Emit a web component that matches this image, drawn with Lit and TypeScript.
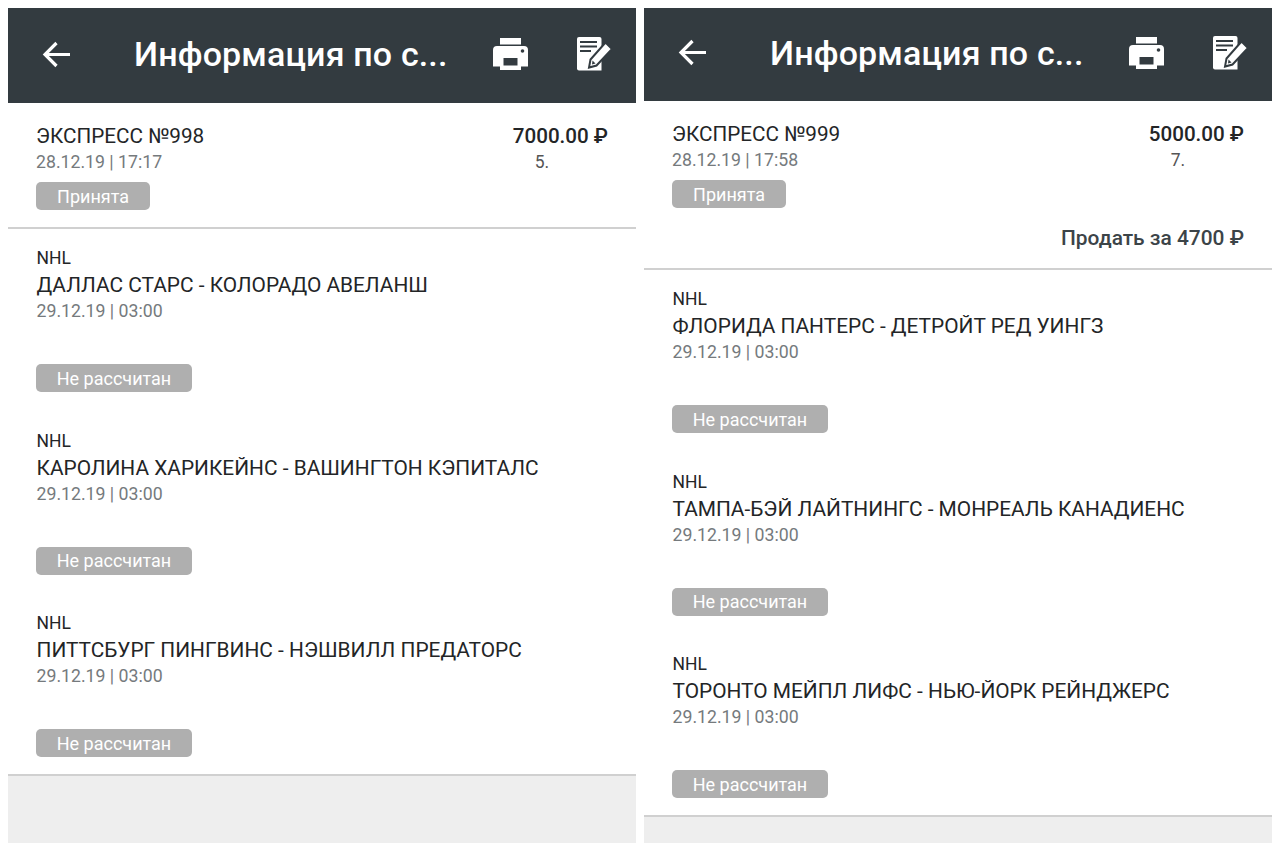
import { LitElement, html, css, svg } from "lit";
import { customElement } from "lit/decorators.js";

const DARK = "#333b40";
const back = svg`<path d="M28 13.500H3M14.500 2 3 13.500 14.500 25" fill="none" stroke="#fff" stroke-width="3.200"/>`;
const printer = svg`<path fill="#fff" d="M7 0h21v6.500H7zM4 8h27a4 4 0 0 1 4 4v16.500h-7V32H7v-3.500H0V12a4 4 0 0 1 4-4z"/><circle cx="29.500" cy="13" r="1.800" fill="${DARK}"/><path fill="${DARK}" d="M10.500 20h14v7.500h-14z"/>`;
const note = svg`<path fill="#fff" d="M2 0h20.500a2 2 0 0 1 2 2v31.500H2a2 2 0 0 1-2-2V2a2 2 0 0 1 2-2z"/><path stroke="${DARK}" stroke-width="1.800" d="M3 5h17M3 9.500h17M3 14h11"/><path fill="#fff" stroke="${DARK}" stroke-width="2" d="M28.500 5.500 35 12 19.500 28.500 12 30.500l1.500-8z"/><path fill="${DARK}" d="M15.500 23.500l3 3-3.500 1z"/>`;

type Item = [string, string];
interface Slip {
  cls: string; num: string; date: string; amount: string; sub: string; sell?: string; items: Item[];
}

const slips: Slip[] = [
  { cls: "left", num: "ЭКСПРЕСС №998", date: "28.12.19 | 17:17", amount: "7000.00 ₽", sub: "5.",
    items: [
      ["ДАЛЛАС СТАРС - КОЛОРАДО АВЕЛАНШ", "29.12.19 | 03:00"],
      ["КАРОЛИНА ХАРИКЕЙНС - ВАШИНГТОН КЭПИТАЛС", "29.12.19 | 03:00"],
      ["ПИТТСБУРГ ПИНГВИНС - НЭШВИЛЛ ПРЕДАТОРС", "29.12.19 | 03:00"],
    ] },
  { cls: "right", num: "ЭКСПРЕСС №999", date: "28.12.19 | 17:58", amount: "5000.00 ₽", sub: "7.", sell: "Продать за 4700 ₽",
    items: [
      ["ФЛОРИДА ПАНТЕРС - ДЕТРОЙТ РЕД УИНГЗ", "29.12.19 | 03:00"],
      ["ТАМПА-БЭЙ ЛАЙТНИНГС - МОНРЕАЛЬ КАНАДИЕНС", "29.12.19 | 03:00"],
      ["ТОРОНТО МЕЙПЛ ЛИФС - НЬЮ-ЙОРК РЕЙНДЖЕРС", "29.12.19 | 03:00"],
    ] },
];

@customElement("app-root")
export class AppRoot extends LitElement {
  static styles = css`
    :host { display: flex; gap: 8px; padding: 8px; height: 853px; box-sizing: border-box; background: #fff;
      font-family: Roboto, "Liberation Sans", sans-serif; color: #232527; overflow: hidden; }
    .panel { width: 628px; height: 835px; background: #eee; display: flex; flex-direction: column; overflow: hidden; }
    .bar { background: #333b40; display: flex; align-items: center; color: #fff; flex: none; box-sizing: border-box; }
    .left .bar { height: 95px; padding-bottom: 3px; }
    .right .bar { height: 93px; padding-bottom: 4px; }
    .bar svg { flex: none; display: block; }
    .back { margin-left: 34px; width: 29px; height: 27px; }
    .title { margin-left: 63px; width: 312px; font-size: 34px; font-weight: 500; white-space: nowrap; letter-spacing: 0.15px; }
    .print { margin-left: 47px; width: 35px; height: 32px; }
    .edit { margin-left: 49px; width: 35px; height: 34px; }
    .summary { background: #fff; border-bottom: 2px solid #d0d0d0; padding: 0 28px; flex: none; }
    .left .summary { height: 124px; }
    .right .summary { height: 167px; }
    .sumrow { display: flex; justify-content: space-between; padding-top: 20px; }
    .num { font-size: 20.700px; line-height: 26px; }
    .date { font-size: 17.700px; line-height: 24px; color: #757a7d; }
    .sumrow .date { line-height: 26px; }
    .amount { font-size: 20.600px; line-height: 26px; font-weight: 500; text-align: right; }
    .sub { font-size: 17.500px; line-height: 26px; color: #555; padding-left: 22px; }
    .badge { display: inline-flex; align-items: center; justify-content: center; height: 28px; background: #afafaf;
      color: #fff; border-radius: 5px; font-size: 18px; box-sizing: border-box; }
    .status { width: 114px; margin-top: 7px; }
    .sell { text-align: right; font-size: 20.900px; font-weight: 500; line-height: 26px; color: #3c4448; margin-top: 17px; }
    .list { background: #fff; border-bottom: 2px solid #d0d0d0; padding: 0 28px 14px; flex: none; }
    .item { padding-top: 16px; height: 182.500px; box-sizing: border-box; display: flex; flex-direction: column; align-items: flex-start; }
    .item:last-child { height: 166px; }
    .league { font-size: 17.500px; line-height: 26px; padding-left: 0.500px; }
    .match { font-size: 20.870px; line-height: 28px; white-space: nowrap; padding-left: 0.500px; }
    .item .date { padding-left: 0.500px; }
    .state { width: 156px; margin-top: 41px; }
  `;

  render() {
    return slips.map((s) => html`
      <section class="panel ${s.cls}">
        <header class="bar">
          <svg class="back" viewBox="0 0 29 27">${back}</svg>
          <div class="title">Информация по с...</div>
          <svg class="print" viewBox="0 0 35 32">${printer}</svg>
          <svg class="edit" viewBox="0 0 35 34">${note}</svg>
        </header>
        <div class="summary">
          <div class="sumrow">
            <div>
              <div class="num">${s.num}</div>
              <div class="date">${s.date}</div>
            </div>
            <div>
              <div class="amount">${s.amount}</div>
              <div class="sub">${s.sub}</div>
            </div>
          </div>
          <div class="badge status">Принята</div>
          ${s.sell ? html`<div class="sell">${s.sell}</div>` : ""}
        </div>
        <div class="list">
          ${s.items.map((it) => html`
            <div class="item">
              <div class="league">NHL</div>
              <div class="match">${it[0]}</div>
              <div class="date">${it[1]}</div>
              <div class="badge state">Не рассчитан</div>
            </div>`)}
        </div>
      </section>`);
  }
}
